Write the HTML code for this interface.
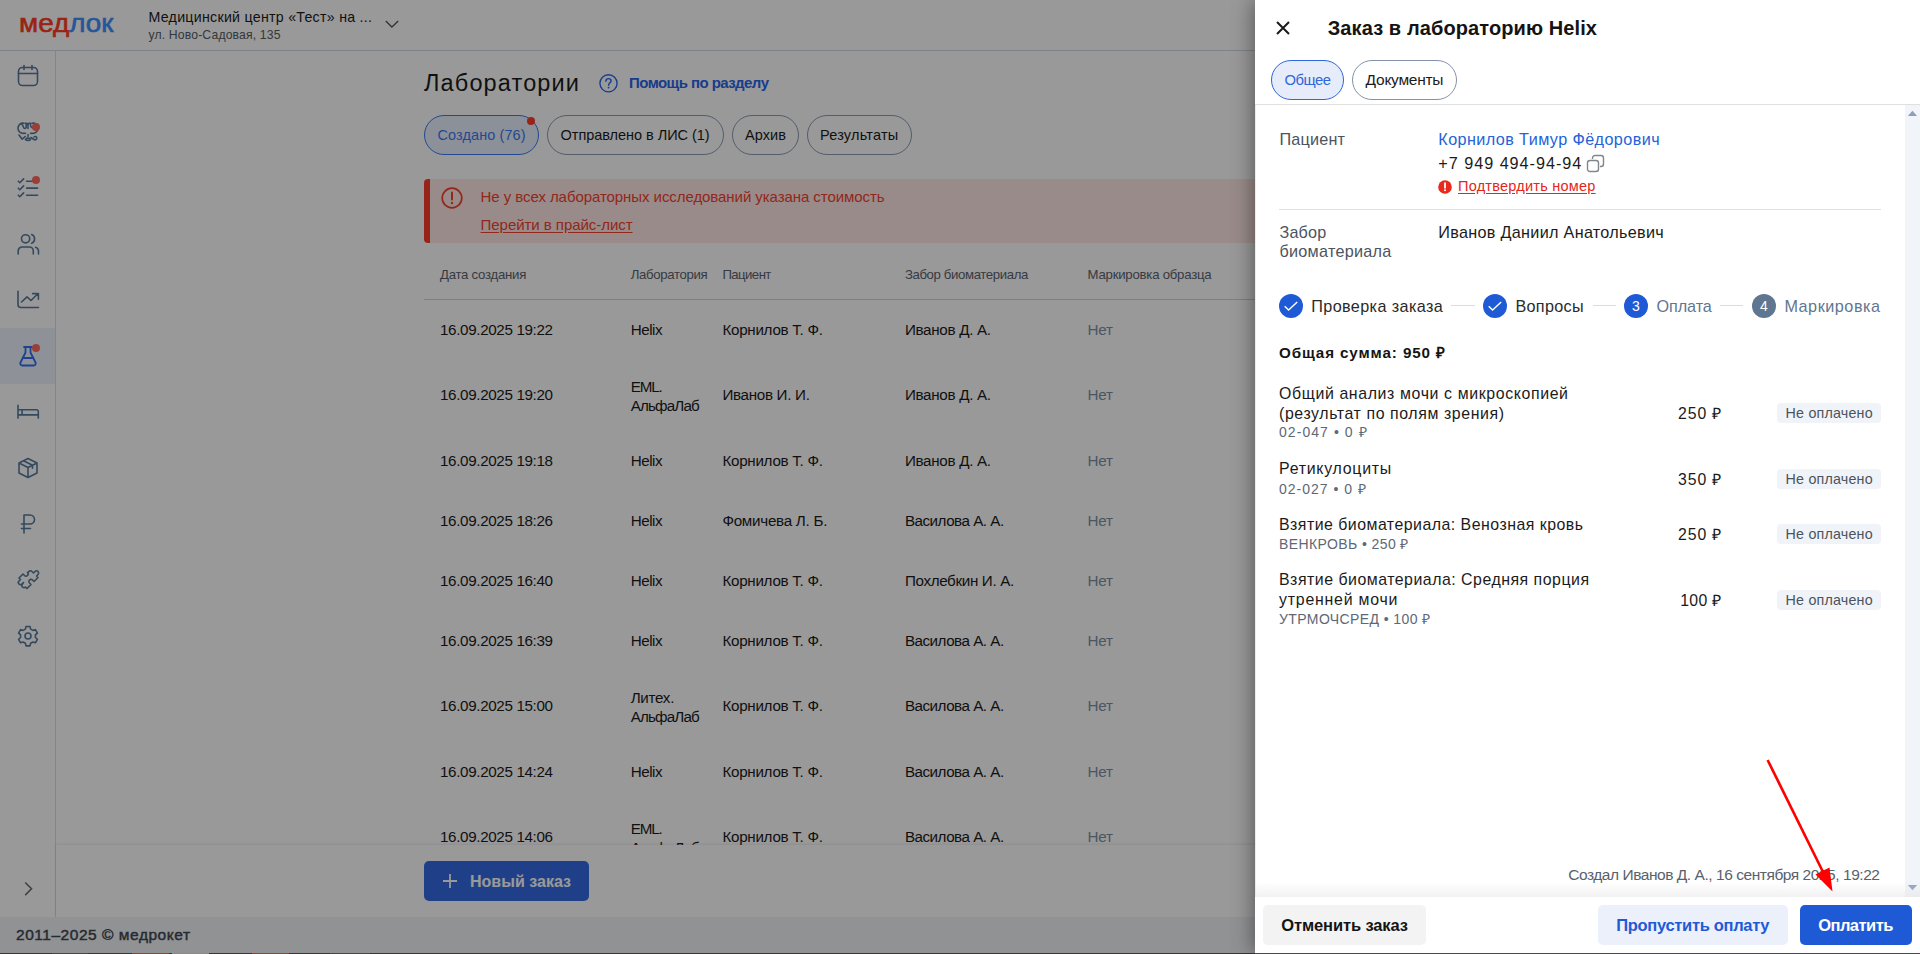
<!DOCTYPE html>
<html><head><meta charset="utf-8">
<style>
*{box-sizing:border-box;margin:0;padding:0}
html,body{width:1920px;height:954px;overflow:hidden;background:#fff;font-family:"Liberation Sans",sans-serif;color:#1b1b1b}
.t{position:absolute;white-space:nowrap}
.b{position:absolute}
svg{position:absolute;overflow:visible}
</style></head><body>
<div class="b" style="left:0;top:0;width:1920px;height:50px;background:#fff"></div><div class="b" style="left:0;top:50px;width:1920px;height:1px;background:#d3dae4"></div><div class="t" style="left:18.6px;top:6.19px;font-size:26px;line-height:34px;color:#1b1b1b;transform:scaleX(1.07);transform-origin:0 0;"><span style="color:#ff3b22;-webkit-text-stroke:0.6px #ff3b22">мед</span><span style="color:#438efd;-webkit-text-stroke:0.6px #438efd">лок</span></div>
<div class="t" style="left:148.5px;top:7.98px;font-size:14.2px;line-height:18px;color:#1b1b1b;letter-spacing:0.272px;">Медицинский центр «Тест» на ...</div>
<div class="t" style="left:148.5px;top:27.37px;font-size:12.2px;line-height:16px;color:#555d66;letter-spacing:0.155px;">ул. Ново-Садовая, 135</div>
<svg style="left:385px;top:20.3px" width="14" height="8" viewBox="0 0 14 8"><path d="M0.8 1 L6.9 7 L13.2 1" fill="none" stroke="#4f555e" stroke-width="1.3"/></svg><div class="b" style="left:55px;top:51px;width:1px;height:866px;background:#d9dee6"></div><div class="b" style="left:0;top:328px;width:55px;height:56px;background:#edf3fd"></div><svg style="left:16.0px;top:63.5px" width="24" height="24" viewBox="0 0 24 24" fill="none" stroke="#587a9c" stroke-width="1.6" stroke-linecap="round" stroke-linejoin="round"><rect x="2.5" y="3.5" width="19" height="18" rx="4"/><path d="M2.5 9.5h19M8 1.5v4M16 1.5v4"/></svg><svg style="left:16.0px;top:119.5px" width="24" height="24" viewBox="0 0 24 24" fill="none" stroke="#587a9c" stroke-width="1.6" stroke-linecap="round" stroke-linejoin="round"><path d="M8 3.2C4.5 2.5 2 5.2 2 8.5c0 3.3 3 5.3 7.5 4.8M3.8 4.2c1.8-.6 3.3.7 3.6 2.6.3 2 2.2 2.2 2.8.4V3.5M9.5 3.3c1.2-.4 2.5.3 2.5 1.8 0-1.5 1.3-2.2 2.5-1.8M12 5v3.5M16 3.2c3.5-.7 6 2 6 5.3 0 3.3-3 5.3-7.5 4.8M14.5 4.5c0 2.2 1 3.6 3 3.3M3 15l3.2 4.2 3-2.7M12 14.5v2M9.5 19.5c.7-1.8 4.3-1.8 5 0-.9 1.4-4.1 1.4-5 0M15 17.5l3 2c1.3.8 3-.1 2.8-1.6-.2-1.4-1.9-1.9-2.8-.9"/></svg><div class="b" style="left:32px;top:123px;width:8px;height:8px;border-radius:50%;background:#ff6a60"></div><svg style="left:16.0px;top:175.5px" width="24" height="24" viewBox="0 0 24 24" fill="none" stroke="#587a9c" stroke-width="1.6" stroke-linecap="round" stroke-linejoin="round"><path d="M2.3 5.2L3.8 6.7L7.6 2.9M2.3 12.2L3.8 13.7L7.6 9.9M2.3 19.2L3.8 20.7L7.6 16.9M10.6 5.2H21.6M10.6 12.1H21.6M10.6 19.3H21.6"/></svg><div class="b" style="left:32px;top:176px;width:8px;height:8px;border-radius:50%;background:#ff6a60"></div><svg style="left:16.0px;top:231.5px" width="24" height="24" viewBox="0 0 24 24" fill="none" stroke="#587a9c" stroke-width="1.6" stroke-linecap="round" stroke-linejoin="round"><circle cx="9.6" cy="6.8" r="4.1"/><path d="M15.6 2.6a4.6 4.6 0 0 1 0 8.6M2.2 22v-3a4 4 0 0 1 4-4h7.1a4 4 0 0 1 4 4v3M19.6 15.2a4 4 0 0 1 2.9 3.8v3"/></svg><svg style="left:16.0px;top:287.5px" width="24" height="24" viewBox="0 0 24 24" fill="none" stroke="#587a9c" stroke-width="1.6" stroke-linecap="round" stroke-linejoin="round"><path d="M2 3.4V16.5a3 3 0 0 0 3 3H22.5M5.5 14L11 8.9L15 12.5L21.6 6M16.6 5.6H22.4V11.2"/></svg><svg style="left:16px;top:343.5px" width="24" height="24" viewBox="0 0 24 24" fill="none" stroke="#2f6ff0" stroke-width="1.8" stroke-linecap="round" stroke-linejoin="round"><path d="M8 3h8M9.5 3v5.5L4.5 18.5c-.7 1.4.2 3 1.8 3h11.4c1.6 0 2.5-1.6 1.8-3L14.5 8.5V3M7 14h10"/></svg><div class="b" style="left:32px;top:344px;width:8px;height:8px;border-radius:50%;background:#ff6a60"></div><svg style="left:16.0px;top:399.5px" width="24" height="24" viewBox="0 0 24 24" fill="none" stroke="#587a9c" stroke-width="1.6" stroke-linecap="round" stroke-linejoin="round"><path d="M2 5.2V18.1M2 14.9H22.3M2 9.8H20.6a1.7 1.7 0 0 1 1.7 1.7V18.1M6.1 9.8V14.9"/></svg><svg style="left:16.0px;top:455.5px" width="24" height="24" viewBox="0 0 24 24" fill="none" stroke="#587a9c" stroke-width="1.6" stroke-linecap="round" stroke-linejoin="round"><path d="M12 2.5l9 4.5v10l-9 4.5-9-4.5V7zM3 7l9 4.5 9-4.5M12 11.5v10M7.5 4.8l9 4.5v3"/></svg><svg style="left:16.0px;top:511.5px" width="24" height="24" viewBox="0 0 24 24" fill="none" stroke="#587a9c" stroke-width="1.6" stroke-linecap="round" stroke-linejoin="round"><path d="M8 21V3h6a4.5 4.5 0 0 1 0 9H5.5M5.5 16.5h9"/></svg><svg style="left:16.0px;top:567.5px" width="24" height="24" viewBox="0 0 24 24" fill="none" stroke="#587a9c" stroke-width="1.6" stroke-linecap="round" stroke-linejoin="round"><path d="M13 3.5a2 2 0 0 1 3 0l1.5 1.5 1.5-1.5a2 2 0 0 1 3 3L20.5 8l1.5 1.5-4 4-1.5-1.5a2 2 0 0 0-3 3l1.5 1.5-4 4-1.5-1.5a2 2 0 0 1-3 0 2 2 0 0 1 0-3L7.5 14.5 6 16a2 2 0 0 1-3-3l1.5-1.5L3 10l4-4 1.5 1.5a2 2 0 0 0 3-3z"/></svg><svg style="left:16.0px;top:623.5px" width="24" height="24" viewBox="0 0 24 24" fill="none" stroke="#587a9c" stroke-width="1.6" stroke-linecap="round" stroke-linejoin="round"><circle cx="12" cy="12" r="3"/><path d="M10 2.5h4l.6 2.6 2.3 1.3 2.5-.8 2 3.5-2 1.8v2.6l2 1.8-2 3.5-2.5-.8-2.3 1.3-.6 2.6h-4l-.6-2.6-2.3-1.3-2.5.8-2-3.5 2-1.8v-2.6l-2-1.8 2-3.5 2.5.8 2.3-1.3z"/></svg><svg style="left:22px;top:880.5px" width="12" height="16" viewBox="0 0 12 16"><path d="M3.2 1.5l6.3 6.3-6.3 6.3" fill="none" stroke="#6e6e6e" stroke-width="1.6"/></svg><div class="b" style="left:0;top:917px;width:1920px;height:37px;background:#f2f3f7"></div><div class="t" style="left:16px;top:924.83px;font-size:15.5px;line-height:20px;color:#3f4852;letter-spacing:0.534px;-webkit-text-stroke:0.45px #3f4852;">2011–2025 © медрокет</div>
<div class="b" style="left:0;top:953px;width:1920px;height:1px;background:#5a5a5a"></div><div class="b" style="left:132px;top:953px;width:37px;height:1px;background:#ff6a5a"></div><div class="b" style="left:172px;top:953px;width:37px;height:1px;background:#e8e8e8"></div><div class="b" style="left:252px;top:953px;width:37px;height:1px;background:#ff6a5a"></div><div class="b" style="left:52px;top:953px;width:36px;height:1px;background:#777"></div><div class="b" style="left:330px;top:953px;width:40px;height:1px;background:#777"></div><div class="t" style="left:424px;top:68.36px;font-size:23.5px;line-height:31px;color:#1b1b1b;letter-spacing:1.145px;">Лаборатории</div>
<svg style="left:599px;top:74px" width="19" height="19" viewBox="0 0 19 19"><circle cx="9.5" cy="9.3" r="8.6" fill="none" stroke="#2a64e9" stroke-width="1.35"/><path d="M6.9 7.2c0-1.6 1.2-2.6 2.6-2.6s2.6 1 2.6 2.4c0 1.7-2.4 2-2.4 3.9v.4" fill="none" stroke="#2a64e9" stroke-width="1.4" stroke-linecap="round"/><circle cx="9.6" cy="13.6" r="0.95" fill="#2a64e9"/></svg><div class="t" style="left:629px;top:73.40px;font-size:15px;line-height:20px;color:#2a64e9;font-weight:700;letter-spacing:-0.559px;">Помощь по разделу</div>
<div class="b" style="left:424px;top:115px;width:115px;height:40px;border:1px solid #3d7af0;border-radius:20.0px;background:#e9f0fd"></div><div class="t" style="left:437.5px;top:126.18px;font-size:14.5px;line-height:19px;color:#3d7af0;letter-spacing:0.08px;">Создано (76)</div>
<div class="b" style="left:527px;top:117px;width:8px;height:8px;border-radius:50%;background:#fb3d2a"></div><div class="b" style="left:547px;top:115px;width:177px;height:40px;border:1px solid #8a9bb2;border-radius:20.0px;background:#fff"></div><div class="t" style="left:560.6px;top:126.18px;font-size:14.5px;line-height:19px;color:#1b1b1b;letter-spacing:-0.042px;">Отправлено в ЛИС (1)</div>
<div class="b" style="left:732px;top:115px;width:67px;height:40px;border:1px solid #8a9bb2;border-radius:20.0px;background:#fff"></div><div class="t" style="left:745px;top:126.18px;font-size:14.5px;line-height:19px;color:#1b1b1b;letter-spacing:0.065px;">Архив</div>
<div class="b" style="left:807px;top:115px;width:105px;height:40px;border:1px solid #8a9bb2;border-radius:20.0px;background:#fff"></div><div class="t" style="left:820px;top:126.18px;font-size:14.5px;line-height:19px;color:#1b1b1b;letter-spacing:0.203px;">Результаты</div>
<div class="b" style="left:424px;top:179px;width:1100px;height:64px;background:#ffe8e5;border-radius:4px;border-left:6px solid #fb3d2a"></div><svg style="left:441px;top:187px" width="22" height="22" viewBox="0 0 22 22"><circle cx="11" cy="11" r="9.8" fill="none" stroke="#f4412f" stroke-width="1.7"/><path d="M11 5.5v7" stroke="#f4412f" stroke-width="2" stroke-linecap="round"/><circle cx="11" cy="16" r="1.2" fill="#f4412f"/></svg><div class="t" style="left:480.6px;top:186.70px;font-size:15px;line-height:20px;color:#f4412f;letter-spacing:-0.066px;">Не у всех лабораторных исследований указана стоимость</div>
<div class="t" style="left:480.6px;top:214.55px;font-size:15px;line-height:20px;color:#f4412f;letter-spacing:-0.049px;text-decoration:underline;text-underline-offset:2px;">Перейти в прайс-лист</div>
<div class="t" style="left:440px;top:266.13px;font-size:13.2px;line-height:17px;color:#5b636e;letter-spacing:-0.256px;">Дата создания</div>
<div class="t" style="left:630.7px;top:266.13px;font-size:13.2px;line-height:17px;color:#5b636e;letter-spacing:-0.333px;">Лаборатория</div>
<div class="t" style="left:722.4px;top:266.13px;font-size:13.2px;line-height:17px;color:#5b636e;letter-spacing:-0.565px;">Пациент</div>
<div class="t" style="left:904.9px;top:266.13px;font-size:13.2px;line-height:17px;color:#5b636e;letter-spacing:-0.373px;">Забор биоматериала</div>
<div class="t" style="left:1087.6px;top:266.13px;font-size:13.2px;line-height:17px;color:#5b636e;letter-spacing:-0.236px;">Маркировка образца</div>
<div class="b" style="left:424px;top:299px;width:1100px;height:1px;background:#cfd4da"></div><div class="b" style="left:424px;top:300px;width:1100px;height:545px;overflow:hidden"><div class="t" style="left:16px;top:19.73px;font-size:15.2px;line-height:20px;color:#1b1b1b;letter-spacing:-0.35px;">16.09.2025 19:22</div>
<div class="t" style="left:206.70000000000005px;top:19.73px;font-size:15.2px;line-height:20px;color:#1b1b1b;letter-spacing:-0.466px;">Helix</div>
<div class="t" style="left:298.4px;top:19.73px;font-size:15.2px;line-height:20px;color:#1b1b1b;letter-spacing:-0.276px;">Корнилов Т. Ф.</div>
<div class="t" style="left:480.9px;top:19.73px;font-size:15.2px;line-height:20px;color:#1b1b1b;letter-spacing:-0.297px;">Иванов Д. А.</div>
<div class="t" style="left:663.5999999999999px;top:19.73px;font-size:15.2px;line-height:20px;color:#7d90a8;letter-spacing:-0.238px;">Нет</div>
<div class="t" style="left:16px;top:85.23px;font-size:15.2px;line-height:20px;color:#1b1b1b;letter-spacing:-0.35px;">16.09.2025 19:20</div>
<div class="t" style="left:206.70000000000005px;top:76.73px;font-size:15.2px;line-height:20px;color:#1b1b1b;letter-spacing:-1.151px;">EML.</div>
<div class="t" style="left:206.70000000000005px;top:95.93px;font-size:15.2px;line-height:20px;color:#1b1b1b;letter-spacing:-0.838px;">АльфаЛаб</div>
<div class="t" style="left:298.4px;top:85.23px;font-size:15.2px;line-height:20px;color:#1b1b1b;letter-spacing:-0.307px;">Иванов И. И.</div>
<div class="t" style="left:480.9px;top:85.23px;font-size:15.2px;line-height:20px;color:#1b1b1b;letter-spacing:-0.297px;">Иванов Д. А.</div>
<div class="t" style="left:663.5999999999999px;top:85.23px;font-size:15.2px;line-height:20px;color:#7d90a8;letter-spacing:-0.238px;">Нет</div>
<div class="t" style="left:16px;top:150.73px;font-size:15.2px;line-height:20px;color:#1b1b1b;letter-spacing:-0.35px;">16.09.2025 19:18</div>
<div class="t" style="left:206.70000000000005px;top:150.73px;font-size:15.2px;line-height:20px;color:#1b1b1b;letter-spacing:-0.466px;">Helix</div>
<div class="t" style="left:298.4px;top:150.73px;font-size:15.2px;line-height:20px;color:#1b1b1b;letter-spacing:-0.276px;">Корнилов Т. Ф.</div>
<div class="t" style="left:480.9px;top:150.73px;font-size:15.2px;line-height:20px;color:#1b1b1b;letter-spacing:-0.297px;">Иванов Д. А.</div>
<div class="t" style="left:663.5999999999999px;top:150.73px;font-size:15.2px;line-height:20px;color:#7d90a8;letter-spacing:-0.238px;">Нет</div>
<div class="t" style="left:16px;top:210.73px;font-size:15.2px;line-height:20px;color:#1b1b1b;letter-spacing:-0.35px;">16.09.2025 18:26</div>
<div class="t" style="left:206.70000000000005px;top:210.73px;font-size:15.2px;line-height:20px;color:#1b1b1b;letter-spacing:-0.466px;">Helix</div>
<div class="t" style="left:298.4px;top:210.73px;font-size:15.2px;line-height:20px;color:#1b1b1b;letter-spacing:-0.264px;">Фомичева Л. Б.</div>
<div class="t" style="left:480.9px;top:210.73px;font-size:15.2px;line-height:20px;color:#1b1b1b;letter-spacing:-0.487px;">Василова А. А.</div>
<div class="t" style="left:663.5999999999999px;top:210.73px;font-size:15.2px;line-height:20px;color:#7d90a8;letter-spacing:-0.238px;">Нет</div>
<div class="t" style="left:16px;top:270.73px;font-size:15.2px;line-height:20px;color:#1b1b1b;letter-spacing:-0.35px;">16.09.2025 16:40</div>
<div class="t" style="left:206.70000000000005px;top:270.73px;font-size:15.2px;line-height:20px;color:#1b1b1b;letter-spacing:-0.466px;">Helix</div>
<div class="t" style="left:298.4px;top:270.73px;font-size:15.2px;line-height:20px;color:#1b1b1b;letter-spacing:-0.276px;">Корнилов Т. Ф.</div>
<div class="t" style="left:480.9px;top:270.73px;font-size:15.2px;line-height:20px;color:#1b1b1b;letter-spacing:-0.34px;">Похлебкин И. А.</div>
<div class="t" style="left:663.5999999999999px;top:270.73px;font-size:15.2px;line-height:20px;color:#7d90a8;letter-spacing:-0.238px;">Нет</div>
<div class="t" style="left:16px;top:330.73px;font-size:15.2px;line-height:20px;color:#1b1b1b;letter-spacing:-0.35px;">16.09.2025 16:39</div>
<div class="t" style="left:206.70000000000005px;top:330.73px;font-size:15.2px;line-height:20px;color:#1b1b1b;letter-spacing:-0.466px;">Helix</div>
<div class="t" style="left:298.4px;top:330.73px;font-size:15.2px;line-height:20px;color:#1b1b1b;letter-spacing:-0.276px;">Корнилов Т. Ф.</div>
<div class="t" style="left:480.9px;top:330.73px;font-size:15.2px;line-height:20px;color:#1b1b1b;letter-spacing:-0.487px;">Василова А. А.</div>
<div class="t" style="left:663.5999999999999px;top:330.73px;font-size:15.2px;line-height:20px;color:#7d90a8;letter-spacing:-0.238px;">Нет</div>
<div class="t" style="left:16px;top:396.23px;font-size:15.2px;line-height:20px;color:#1b1b1b;letter-spacing:-0.35px;">16.09.2025 15:00</div>
<div class="t" style="left:206.70000000000005px;top:387.73px;font-size:15.2px;line-height:20px;color:#1b1b1b;letter-spacing:-0.294px;">Литех.</div>
<div class="t" style="left:206.70000000000005px;top:406.93px;font-size:15.2px;line-height:20px;color:#1b1b1b;letter-spacing:-0.838px;">АльфаЛаб</div>
<div class="t" style="left:298.4px;top:396.23px;font-size:15.2px;line-height:20px;color:#1b1b1b;letter-spacing:-0.276px;">Корнилов Т. Ф.</div>
<div class="t" style="left:480.9px;top:396.23px;font-size:15.2px;line-height:20px;color:#1b1b1b;letter-spacing:-0.487px;">Василова А. А.</div>
<div class="t" style="left:663.5999999999999px;top:396.23px;font-size:15.2px;line-height:20px;color:#7d90a8;letter-spacing:-0.238px;">Нет</div>
<div class="t" style="left:16px;top:461.73px;font-size:15.2px;line-height:20px;color:#1b1b1b;letter-spacing:-0.35px;">16.09.2025 14:24</div>
<div class="t" style="left:206.70000000000005px;top:461.73px;font-size:15.2px;line-height:20px;color:#1b1b1b;letter-spacing:-0.466px;">Helix</div>
<div class="t" style="left:298.4px;top:461.73px;font-size:15.2px;line-height:20px;color:#1b1b1b;letter-spacing:-0.276px;">Корнилов Т. Ф.</div>
<div class="t" style="left:480.9px;top:461.73px;font-size:15.2px;line-height:20px;color:#1b1b1b;letter-spacing:-0.487px;">Василова А. А.</div>
<div class="t" style="left:663.5999999999999px;top:461.73px;font-size:15.2px;line-height:20px;color:#7d90a8;letter-spacing:-0.238px;">Нет</div>
<div class="t" style="left:16px;top:527.23px;font-size:15.2px;line-height:20px;color:#1b1b1b;letter-spacing:-0.35px;">16.09.2025 14:06</div>
<div class="t" style="left:206.70000000000005px;top:518.73px;font-size:15.2px;line-height:20px;color:#1b1b1b;letter-spacing:-1.151px;">EML.</div>
<div class="t" style="left:206.70000000000005px;top:537.93px;font-size:15.2px;line-height:20px;color:#1b1b1b;letter-spacing:-0.838px;">АльфаЛаб</div>
<div class="t" style="left:298.4px;top:527.23px;font-size:15.2px;line-height:20px;color:#1b1b1b;letter-spacing:-0.276px;">Корнилов Т. Ф.</div>
<div class="t" style="left:480.9px;top:527.23px;font-size:15.2px;line-height:20px;color:#1b1b1b;letter-spacing:-0.487px;">Василова А. А.</div>
<div class="t" style="left:663.5999999999999px;top:527.23px;font-size:15.2px;line-height:20px;color:#7d90a8;letter-spacing:-0.238px;">Нет</div>
</div><div class="b" style="left:56px;top:845px;width:1864px;height:72px;background:#fff;box-shadow:0 -1px 2px rgba(0,0,0,0.08)"></div><div class="b" style="left:424px;top:861px;width:165px;height:40px;background:#346ce4;border-radius:5px"></div><svg style="left:442px;top:873px" width="16" height="16" viewBox="0 0 16 16"><path d="M8 1v14M1 8h14" stroke="#fff" stroke-width="1.8"/></svg><div class="t" style="left:470px;top:870.96px;font-size:16px;line-height:21px;color:#fff;font-weight:700;letter-spacing:0.019px;">Новый заказ</div>
<div class="b" style="left:0;top:0;width:1920px;height:954px;background:rgba(0,0,0,0.4)"></div><div class="b" style="left:1255px;top:0;width:665px;height:954px;background:#fff;box-shadow:-2px 0 20px rgba(0,0,0,0.42)"></div><svg style="left:1276px;top:21px" width="14" height="14" viewBox="0 0 14 14"><path d="M1 1L13 13M13 1L1 13" stroke="#1b1b1b" stroke-width="2"/></svg><div class="t" style="left:1327.7px;top:15.07px;font-size:20px;line-height:26px;color:#141414;font-weight:700;letter-spacing:0.103px;">Заказ в лабораторию Helix</div>
<div class="b" style="left:1271px;top:60px;width:73px;height:40px;border:1px solid #2f66d8;border-radius:20.0px;background:#e6ecfa"></div><div class="t" style="left:1284.6px;top:70.67px;font-size:14.8px;line-height:19px;color:#2f66d8;letter-spacing:-0.513px;">Общее</div>
<div class="b" style="left:1352px;top:60px;width:105px;height:40px;border:1px solid #8593a8;border-radius:20.0px;background:#fff"></div><div class="t" style="left:1365.6px;top:69.93px;font-size:15.5px;line-height:20px;color:#1b1b1b;letter-spacing:-0.251px;">Документы</div>
<div class="b" style="left:1255px;top:104px;width:665px;height:1px;background:#e0e0e0"></div><div class="b" style="left:1255px;top:105px;width:1px;height:792px;background:#ececec"></div><div class="b" style="left:1905px;top:105px;width:15px;height:792px;background:#f1f4f9"></div><svg style="left:1905px;top:108px" width="15" height="12" viewBox="0 0 15 12"><path d="M2.9 7.9h9.2L7.5 2.8z" fill="#8aa0bd"/></svg><svg style="left:1905px;top:880px" width="15" height="12" viewBox="0 0 15 12"><path d="M2.9 5.1h9.2L7.5 10.2z" fill="#8aa0bd"/></svg><div class="t" style="left:1279.4px;top:128.89px;font-size:16.2px;line-height:21px;color:#4b5461;letter-spacing:0.215px;">Пациент</div>
<div class="t" style="left:1438.3px;top:128.89px;font-size:16.2px;line-height:21px;color:#2563d9;letter-spacing:0.407px;">Корнилов Тимур Фёдорович</div>
<div class="t" style="left:1438.3px;top:153.39px;font-size:16.2px;line-height:21px;color:#1b1b1b;letter-spacing:0.982px;">+7 949 494-94-94</div>
<svg style="left:1586px;top:154px" width="20" height="20" viewBox="0 0 20 20" fill="none" stroke="#80868e" stroke-width="1.4"><rect x="1.5" y="6.5" width="11" height="11" rx="2.5"/><path d="M6.5 5V4a2.5 2.5 0 0 1 2.5-2.5h6A2.5 2.5 0 0 1 17.5 4v6a2.5 2.5 0 0 1-2.5 2.5h-1"/></svg><svg style="left:1438px;top:180px" width="14" height="14" viewBox="0 0 14 14"><circle cx="7" cy="7" r="6.8" fill="#e8291c"/><path d="M7 3.2v4.6" stroke="#fff" stroke-width="1.8" stroke-linecap="round"/><circle cx="7" cy="10.3" r="1" fill="#fff"/></svg><div class="t" style="left:1458px;top:177.38px;font-size:14.5px;line-height:19px;color:#e2261c;letter-spacing:0.24px;text-decoration:underline;text-underline-offset:2px;">Подтвердить номер</div>
<div class="b" style="left:1279px;top:209px;width:602px;height:1px;background:#dfe2e7"></div><div class="t" style="left:1279.4px;top:221.59px;font-size:16.2px;line-height:21px;color:#4b5461;letter-spacing:0.209px;">Забор</div>
<div class="t" style="left:1279.4px;top:241.39px;font-size:16.2px;line-height:21px;color:#4b5461;letter-spacing:0.279px;">биоматериала</div>
<div class="t" style="left:1438.3px;top:221.59px;font-size:16.2px;line-height:21px;color:#1b1b1b;letter-spacing:0.302px;">Иванов Даниил Анатольевич</div>
<svg style="left:1279px;top:294px" width="24" height="24" viewBox="0 0 24 24"><circle cx="12" cy="12" r="12" fill="#1f5ad6"/><path d="M5.7 12.3L9.6 16.1L18.2 7.9" fill="none" stroke="#fff" stroke-width="1.4" stroke-linecap="butt" stroke-linejoin="miter"/></svg><div class="t" style="left:1311.25px;top:295.69px;font-size:16.2px;line-height:21px;color:#2a2a2a;letter-spacing:0.384px;">Проверка заказа</div>
<div class="b" style="left:1451px;top:305px;width:24px;height:1px;background:#d9dde3"></div><svg style="left:1483px;top:294px" width="24" height="24" viewBox="0 0 24 24"><circle cx="12" cy="12" r="12" fill="#1f5ad6"/><path d="M5.7 12.3L9.6 16.1L18.2 7.9" fill="none" stroke="#fff" stroke-width="1.4" stroke-linecap="butt" stroke-linejoin="miter"/></svg><div class="t" style="left:1515.4px;top:295.69px;font-size:16.2px;line-height:21px;color:#2a2a2a;letter-spacing:0.331px;">Вопросы</div>
<div class="b" style="left:1593px;top:305px;width:23px;height:1px;background:#d9dde3"></div><svg style="left:1624px;top:294px" width="24" height="24" viewBox="0 0 24 24"><circle cx="12" cy="12" r="12" fill="#1f5ad6"/><text x="12" y="17" text-anchor="middle" font-family="Liberation Sans" font-size="14" fill="#fff">3</text></svg><div class="t" style="left:1656.5px;top:295.69px;font-size:16.2px;line-height:21px;color:#5f7691;letter-spacing:-0.078px;">Оплата</div>
<div class="b" style="left:1720px;top:305px;width:23px;height:1px;background:#d9dde3"></div><svg style="left:1752px;top:294px" width="24" height="24" viewBox="0 0 24 24"><circle cx="12" cy="12" r="12" fill="#5f7691"/><text x="12" y="17" text-anchor="middle" font-family="Liberation Sans" font-size="14" fill="#fff">4</text></svg><div class="t" style="left:1784.4px;top:295.69px;font-size:16.2px;line-height:21px;color:#5f7691;letter-spacing:0.528px;">Маркировка</div>
<div class="t" style="left:1279px;top:343.13px;font-size:15.2px;line-height:20px;color:#141414;font-weight:700;letter-spacing:0.884px;">Общая сумма: 950 ₽</div>
<div class="t" style="left:1279px;top:382.59px;font-size:15.9px;line-height:21px;color:#1b1b1b;letter-spacing:0.616px;">Общий анализ мочи с микроскопией</div>
<div class="t" style="left:1279px;top:402.69px;font-size:15.9px;line-height:21px;color:#1b1b1b;letter-spacing:0.593px;">(результат по полям зрения)</div>
<div class="t" style="left:1279px;top:423.35px;font-size:14px;line-height:18px;color:#5d6877;letter-spacing:1.059px;">02-047 • 0 ₽</div>
<div class="t" style="left:1678.0px;top:402.93px;font-size:15.8px;line-height:21px;color:#1b1b1b;letter-spacing:0.938px;">250 ₽</div>
<div class="b" style="left:1777px;top:403.25px;width:104px;height:19.5px;background:#f0f3f8;border-radius:4px"></div><div class="t" style="left:1785.6px;top:403.55px;font-size:14.3px;line-height:19px;color:#4a5360;letter-spacing:0.183px;">Не оплачено</div>
<div class="t" style="left:1279px;top:458.19px;font-size:15.9px;line-height:21px;color:#1b1b1b;letter-spacing:0.749px;">Ретикулоциты</div>
<div class="t" style="left:1279px;top:479.55px;font-size:14px;line-height:18px;color:#5d6877;letter-spacing:0.995px;">02-027 • 0 ₽</div>
<div class="t" style="left:1677.9px;top:468.93px;font-size:15.8px;line-height:21px;color:#1b1b1b;letter-spacing:0.963px;">350 ₽</div>
<div class="b" style="left:1777px;top:469.25px;width:104px;height:19.5px;background:#f0f3f8;border-radius:4px"></div><div class="t" style="left:1785.6px;top:469.55px;font-size:14.3px;line-height:19px;color:#4a5360;letter-spacing:0.183px;">Не оплачено</div>
<div class="t" style="left:1279px;top:514.09px;font-size:15.9px;line-height:21px;color:#1b1b1b;letter-spacing:0.479px;">Взятие биоматериала: Венозная кровь</div>
<div class="t" style="left:1279px;top:534.75px;font-size:14px;line-height:18px;color:#5d6877;letter-spacing:0.411px;">ВЕНКРОВЬ • 250 ₽</div>
<div class="t" style="left:1678.0px;top:523.93px;font-size:15.8px;line-height:21px;color:#1b1b1b;letter-spacing:0.938px;">250 ₽</div>
<div class="b" style="left:1777px;top:524.25px;width:104px;height:19.5px;background:#f0f3f8;border-radius:4px"></div><div class="t" style="left:1785.6px;top:524.55px;font-size:14.3px;line-height:19px;color:#4a5360;letter-spacing:0.183px;">Не оплачено</div>
<div class="t" style="left:1279px;top:569.39px;font-size:15.9px;line-height:21px;color:#1b1b1b;letter-spacing:0.503px;">Взятие биоматериала: Средняя порция</div>
<div class="t" style="left:1279px;top:589.39px;font-size:15.9px;line-height:21px;color:#1b1b1b;letter-spacing:0.779px;">утренней мочи</div>
<div class="t" style="left:1279px;top:609.95px;font-size:14px;line-height:18px;color:#5d6877;letter-spacing:0.4px;">УТРМОЧСРЕД • 100 ₽</div>
<div class="t" style="left:1680.2px;top:589.93px;font-size:15.8px;line-height:21px;color:#1b1b1b;letter-spacing:0.387px;">100 ₽</div>
<div class="b" style="left:1777px;top:590.25px;width:104px;height:19.5px;background:#f0f3f8;border-radius:4px"></div><div class="t" style="left:1785.6px;top:590.55px;font-size:14.3px;line-height:19px;color:#4a5360;letter-spacing:0.183px;">Не оплачено</div>
<div class="t" style="left:1568.2px;top:864.63px;font-size:15.5px;line-height:20px;color:#59616c;letter-spacing:-0.452px;">Создал Иванов Д. А., 16 сентября 2025, 19:22</div>
<div class="b" style="left:1255px;top:882px;width:665px;height:15px;background:linear-gradient(rgba(225,225,225,0),rgba(225,225,225,0.45))"></div><div class="b" style="left:1263px;top:905px;width:163px;height:40px;background:#f3f3f4;border-radius:5px"></div><div class="t" style="left:1281.2px;top:915.18px;font-size:16.5px;line-height:21px;color:#141414;font-weight:700;letter-spacing:-0.109px;">Отменить заказ</div>
<div class="b" style="left:1598px;top:905px;width:190px;height:40px;background:#ecf0fb;border-radius:5px"></div><div class="t" style="left:1616.3px;top:915.18px;font-size:16.5px;line-height:21px;color:#1f5ad6;font-weight:700;letter-spacing:-0.321px;">Пропустить оплату</div>
<div class="b" style="left:1800px;top:905px;width:112px;height:40px;background:#1f5ad6;border-radius:5px"></div><div class="t" style="left:1818.2px;top:915.18px;font-size:16.5px;line-height:21px;color:#fff;font-weight:700;letter-spacing:-0.532px;">Оплатить</div>
<div class="b" style="left:1255px;top:953px;width:665px;height:1px;background:#4a4a4a"></div><svg style="left:0;top:0" width="1920" height="954" viewBox="0 0 1920 954"><path d="M1767.6 760L1826 878" stroke="#ff0000" stroke-width="2.6" stroke-linecap="butt"/><path d="M1832.5 891.5L1815.5 874.5L1829.5 867.5Z" fill="#ff0000"/></svg></body></html>
